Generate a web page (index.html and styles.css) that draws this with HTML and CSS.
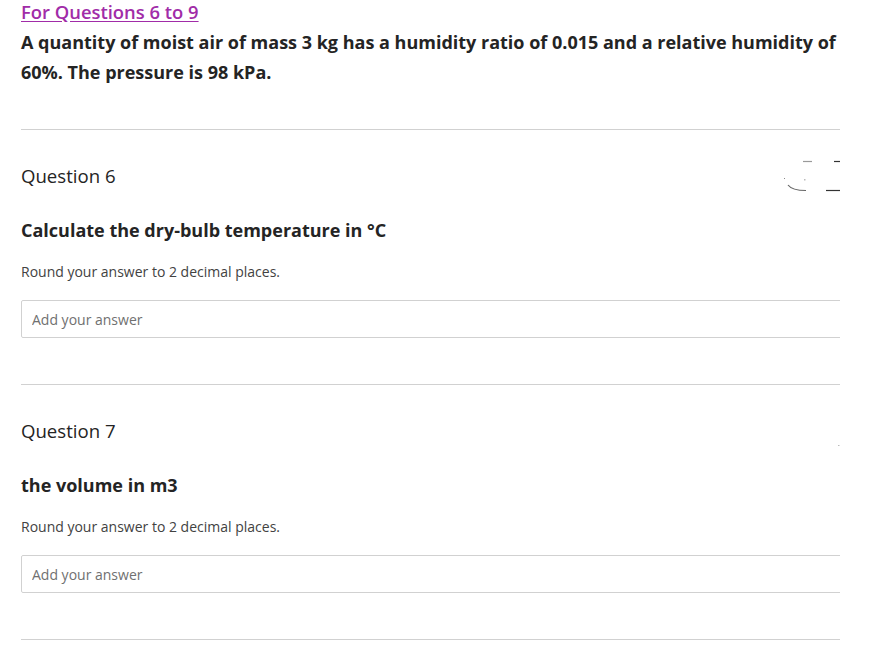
FILE: index.html
```html
<!DOCTYPE html>
<html>
<head>
<meta charset="utf-8">
<link rel="stylesheet" href="styles.css">
</head>
<body>
<div class="page">
  <div class="intro">
    <a class="intro-link" href="#">For Questions 6 to 9</a>
    <p class="intro-text">A quantity of moist air of mass 3 kg has a humidity ratio of 0.015 and a relative humidity of 60%. The pressure is 98 kPa.</p>
  </div>

  <section class="question">
    <div class="q-head">
      <div class="q-title">Question 6</div>
      <svg class="q-mark" width="60" height="38" viewBox="0 0 60 38">
        <path d="M23 5.5 H32" stroke="#9a9a9a" stroke-width="1.2" fill="none"/>
        <path d="M54 5.5 H60" stroke="#333" stroke-width="1.2" fill="none"/>
        <path d="M8 29 Q12 34.5 26 34.5" stroke="#666" stroke-width="1.2" fill="none"/>
        <path d="M46 34.5 H60" stroke="#333" stroke-width="1.2" fill="none"/>
        <rect x="4" y="22" width="1" height="1" fill="#888"/>
        <rect x="24" y="23" width="1.5" height="1.5" fill="#bbb"/>
      </svg>
    </div>
    <div class="q-prompt">Calculate the dry-bulb temperature in °C</div>
    <div class="q-hint">Round your answer to 2 decimal places.</div>
    <div class="q-input-wrap"><input class="q-input" type="text" placeholder="Add your answer"></div>
  </section>

  <section class="question">
    <div class="q-head">
      <div class="q-title">Question 7</div>
      <svg class="q-mark" width="60" height="38" viewBox="0 0 60 38">
        <rect x="58" y="34" width="1.5" height="1" fill="#bbb"/>
      </svg>
    </div>
    <div class="q-prompt">the volume in m3</div>
    <div class="q-hint">Round your answer to 2 decimal places.</div>
    <div class="q-input-wrap"><input class="q-input" type="text" placeholder="Add your answer"></div>
  </section>

  <section class="question last"></section>
</div>
</body>
</html>
```

FILE: styles.css
```css
html, body {
  margin: 0;
  padding: 0;
  background: #ffffff;
}
body {
  font-family: "Open Sans", "Noto Sans", sans-serif;
  color: #242424;
}
.page {
  width: 819px;
  padding-left: 21px;
}
.intro-link {
  display: block;
  font-size: 18.4px;
  line-height: 24px;
  font-weight: 600;
  color: #a12ca8;
  text-decoration: underline;
  text-underline-offset: 2px;
  width: max-content;
}
.intro-text {
  margin: 3px 0 0 0;
  font-size: 18px;
  line-height: 30px;
  font-weight: 700;
  color: #242424;
}
.intro {
  padding-bottom: 42px;
}
.question {
  border-top: 1px solid #d1d1d1;
  padding-top: 34px;
  padding-bottom: 46px;
}
.question.last {
  padding: 0;
}
.q-head {
  display: flex;
  justify-content: space-between;
  align-items: flex-start;
  height: 24px;
}
.q-title {
  font-size: 18.6px;
  line-height: 24px;
  font-weight: 400;
}
.q-mark {
  margin-top: -8px;
  margin-right: 0;
  display: block;
}
.q-prompt {
  margin-top: 30px;
  font-size: 18px;
  line-height: 24px;
  font-weight: 700;
}
.q-hint {
  margin-top: 20px;
  font-size: 14px;
  line-height: 20px;
  color: #424242;
}
.q-input-wrap {
  margin-top: 18px;
  overflow: hidden;
}
.q-input {
  box-sizing: border-box;
  display: block;
  width: 830px;
  height: 38px;
  border: 1px solid #d1d1d1;
  border-radius: 2px;
  padding: 0 10px;
  font-family: "Open Sans", "Noto Sans", sans-serif;
  font-size: 14px;
  color: #242424;
  background: #fff;
  outline: none;
}
.q-input::placeholder {
  color: #707070;
}
```
